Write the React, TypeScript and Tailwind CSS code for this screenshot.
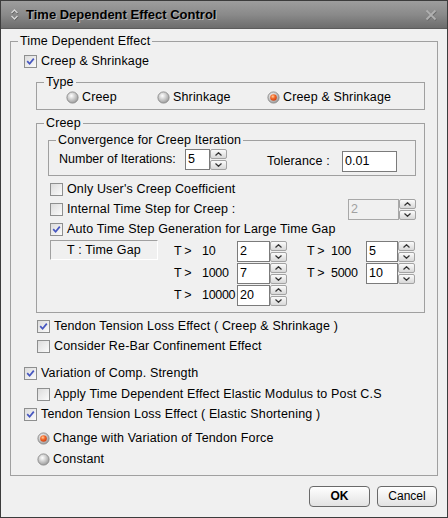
import React from "react";

function CheckBox({ checked }: { checked?: boolean }) {
  return (
    <span className="w-[13px] h-[13px] shrink-0 border border-[#8e8f8f] bg-linear-to-br from-[#dcdcdc] to-[#fbfbfb] flex items-center justify-center">
      {checked && (
        <svg width="9" height="9" viewBox="0 0 9 9">
          <path d="M1.2 4.2 L3.6 6.8 L7.8 1.6" fill="none" stroke="#4656c0" strokeWidth="1.7" />
        </svg>
      )}
    </span>
  );
}

function Radio({ selected }: { selected?: boolean }) {
  return (
    <svg width="13" height="13" viewBox="0 0 13 13" className="shrink-0">
      <defs>
        <radialGradient id="rgGray" cx="40%" cy="35%" r="75%">
          <stop offset="0" stopColor="#ffffff" />
          <stop offset="1" stopColor="#8f8f8f" />
        </radialGradient>
        <radialGradient id="rgOrange" cx="40%" cy="35%" r="70%">
          <stop offset="0" stopColor="#ffd0a0" />
          <stop offset="0.45" stopColor="#f26a2a" />
          <stop offset="1" stopColor="#c83a10" />
        </radialGradient>
      </defs>
      <circle cx="6.5" cy="6.5" r="5.6" fill="url(#rgGray)" stroke="#8a8a8a" strokeWidth="0.9" />
      {selected && <circle cx="6.5" cy="6.5" r="3.3" fill="url(#rgOrange)" />}
    </svg>
  );
}

function SpinBtn({ up }: { up?: boolean }) {
  return (
    <div className="flex-1 border border-[#a3a3a3] rounded-[2px] bg-linear-to-b from-[#fbfbfb] to-[#d8d8d8] flex items-center justify-center">
      <svg width="7" height="4" viewBox="0 0 7 4">
        <path d={up ? "M0.5 3.5 L3.5 0.7 L6.5 3.5" : "M0.5 0.5 L3.5 3.3 L6.5 0.5"} fill="none" stroke="#333" strokeWidth="1.2" />
      </svg>
    </div>
  );
}

function Spin() {
  return (
    <div className="flex flex-col w-[17px] h-[21px] gap-[1px] shrink-0">
      <SpinBtn up />
      <SpinBtn />
    </div>
  );
}

function Input({ value, w, disabled }: { value: string; w: string; disabled?: boolean }) {
  return (
    <div
      className={
        (disabled ? "bg-[#f0f0f0] border-[#a8a8a8] text-[#a0a0a0] " : "bg-white border-[#7b7b7b] text-black ") +
        w +
        " h-[21px] border pl-[2px] leading-[18px] shrink-0 tracking-normal"
      }
    >
      {value}
    </div>
  );
}

function Group({ title, className, children }: { title: string; className?: string; children: React.ReactNode }) {
  return (
    <fieldset className={"border border-[#a0a0a0] min-w-0 " + (className || "")}>
      <legend className="ml-[7px] px-[2px] leading-[15px]">{title}</legend>
      {children}
    </fieldset>
  );
}

function CheckRow({ checked, label, className }: { checked?: boolean; label: string; className?: string }) {
  return (
    <div className={"flex items-center gap-[4px] " + (className || "")}>
      <CheckBox checked={checked} />
      <span className="whitespace-pre">{label}</span>
    </div>
  );
}

function RadioRow({ selected, label, className }: { selected?: boolean; label: string; className?: string }) {
  return (
    <div className={"flex items-center gap-[3px] " + (className || "")}>
      <Radio selected={selected} />
      <span className="whitespace-pre">{label}</span>
    </div>
  );
}

function GapRow({ a, av, b, bv }: { a: string; av: string; b?: string; bv?: string }) {
  return (
    <div className="flex items-center h-[22px] tracking-[-0.3px]">
      <span className="w-[28px]">T &gt;</span>
      <span className="w-[35px]">{a}</span>
      <Input value={av} w="w-[33px]" />
      <Spin />
      {b && (
        <>
          <span className="w-[20px]" />
          <span className="w-[24px]">T &gt;</span>
          <span className="w-[35px]">{b}</span>
          <Input value={bv || ""} w="w-[32px]" />
          <Spin />
        </>
      )}
    </div>
  );
}

export default function App() {
  return (
    <div className="w-[448px] h-[518px] border border-[#3c3c3c] bg-[#f0f0f0] flex flex-col text-[12.5px] leading-[15px] tracking-[0.15px] text-black [font-family:'Liberation_Sans',Arial,sans-serif] overflow-hidden">
      {/* Title bar */}
      <div className="h-[28px] shrink-0 flex items-center bg-linear-to-b from-[#9e9e9e] via-[#8a8a8a] to-[#6d6d6d] border-b border-[#5c5c5c] pl-[9px] pr-[10px] tracking-normal">
        <svg width="9" height="13" viewBox="0 0 9 13" className="shrink-0">
          <path d="M1.5 5 L4.5 2 L7.5 5" fill="none" stroke="#5a5a5a" strokeWidth="1.6" transform="translate(0.5,0.6)" />
          <path d="M1.5 8 L4.5 11 L7.5 8" fill="none" stroke="#5a5a5a" strokeWidth="1.6" transform="translate(0.5,0.6)" />
          <path d="M1.5 5 L4.5 2 L7.5 5" fill="none" stroke="#d8d8d8" strokeWidth="1.4" />
          <path d="M1.5 8 L4.5 11 L7.5 8" fill="none" stroke="#d8d8d8" strokeWidth="1.4" />
        </svg>
        <span className="ml-[7px] font-bold text-[13px] [text-shadow:1px_1px_0_#b8b8b8]">Time Dependent Effect Control</span>
        <span className="flex-1" />
        <svg width="12" height="12" viewBox="0 0 12 12" className="shrink-0">
          <path d="M1.5 1.5 L10.5 10.5 M10.5 1.5 L1.5 10.5" stroke="#6a6a6a" strokeWidth="2.2" transform="translate(0.6,0.8)" />
          <path d="M1.5 1.5 L10.5 10.5 M10.5 1.5 L1.5 10.5" stroke="#b0b0b0" strokeWidth="1.8" />
        </svg>
      </div>

      {/* Body */}
      <div className="flex-1 flex flex-col pt-[5px] px-[9px]">
        <Group title="Time Dependent Effect">
          <div className="pt-[2px] pl-[13px] pr-[12px] pb-[5px] flex flex-col">
            <CheckRow checked label="Creep & Shrinkage" className="h-[20px]" />
            <div className="ml-[12px] flex flex-col">
              <Group title="Type" className="mt-[4px]">
                <div className="flex items-center h-[15px] pl-[29px] mb-[4px]">
                  <RadioRow label="Creep" className="w-[91px]" />
                  <RadioRow label="Shrinkage" className="w-[110px]" />
                  <RadioRow selected label="Creep & Shrinkage" />
                </div>
              </Group>

              <Group title="Creep" className="mt-[6px]">
                <div className="pl-[11px] pr-[8px] pt-[2px] pb-[6px] flex flex-col">
                  <Group title="Convergence for Creep Iteration">
                    <div className="flex items-center h-[23px] pl-[10px] mb-[4px]">
                      <span className="w-[126px] tracking-normal">Number of Iterations:</span>
                      <Input value="5" w="w-[25px]" />
                      <Spin />
                      <span className="ml-[40px] w-[75px] mt-[3px]">Tolerance :</span>
                      <div className="mt-[4px]">
                        <Input value="0.01" w="w-[55px]" />
                      </div>
                    </div>
                  </Group>
                  <CheckRow label="Only User's Creep Coefficient" className="h-[20px] mt-[3px] ml-[2px]" />
                  <div className="flex items-center justify-between h-[20px] ml-[2px]">
                    <CheckRow label="Internal Time Step for Creep :" />
                    <div className="flex">
                      <Input value="2" w="w-[51px]" disabled />
                      <Spin />
                    </div>
                  </div>
                  <CheckRow checked label="Auto Time Step Generation for Large Time Gap" className="h-[20px] ml-[2px]" />
                  <div className="flex mt-[1px] ml-[2px]">
                    <div className="w-[108px] h-[20px] border border-[#a0a0a0] border-r-white border-b-white flex items-center justify-center shrink-0">
                      T : Time Gap
                    </div>
                    <div className="ml-[16px] flex flex-col">
                      <GapRow a="10" av="2" b="100" bv="5" />
                      <GapRow a="1000" av="7" b="5000" bv="10" />
                      <GapRow a="10000" av="20" />
                    </div>
                  </div>
                </div>
              </Group>

              <CheckRow checked label="Tendon Tension Loss Effect ( Creep & Shrinkage )" className="h-[20px] mt-[3px] ml-[1px]" />
              <CheckRow label="Consider Re-Bar Confinement Effect" className="h-[20px] ml-[1px]" />
            </div>

            <CheckRow checked label="Variation of Comp. Strength" className="h-[21px] mt-[7px]" />
            <CheckRow label="Apply Time Dependent Effect Elastic Modulus to Post C.S" className="h-[20px] ml-[13px]" />
            <CheckRow checked label="Tendon Tension Loss Effect ( Elastic Shortening )" className="h-[21px]" />
            <RadioRow selected label="Change with Variation of Tendon Force" className="h-[21px] mt-[3px] ml-[13px]" />
            <RadioRow label="Constant" className="h-[21px] ml-[13px]" />
          </div>
        </Group>

        <div className="flex justify-end gap-[7px] mt-[10px] mr-[1px] tracking-normal">
          <button className="w-[61px] h-[21px] rounded-[4px] border border-[#6a6a6a] bg-linear-to-b from-white to-[#e2e2e2] font-bold text-[12px] leading-[19px]">
            OK
          </button>
          <button className="w-[60px] h-[21px] rounded-[4px] border border-[#6a6a6a] bg-linear-to-b from-white to-[#e2e2e2] text-[12px] leading-[19px]">
            Cancel
          </button>
        </div>
      </div>
    </div>
  );
}
